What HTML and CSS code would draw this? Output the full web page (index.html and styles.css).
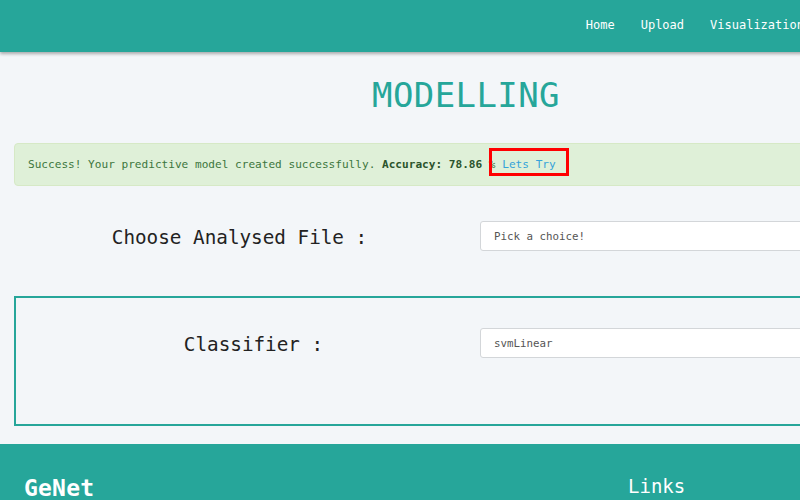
FILE: index.html
```html
<!DOCTYPE html>
<html lang="en">
<head>
<meta charset="utf-8">
<title>Modelling - GeNet</title>
<link rel="stylesheet" href="styles.css">
</head>
<body>
<div class="page">
  <nav class="navbar">
    <ul class="nav-links">
      <li><a href="#">Home</a></li>
      <li><a href="#">Upload</a></li>
      <li><a href="#">Visualization</a></li>
      <li><a href="#">Modelling</a></li>
    </ul>
  </nav>

  <main class="main">
    <h1 class="title">MODELLING</h1>

    <div class="alert">Success! Your predictive model created successfully. <strong>Accuracy: 78.86</strong> % <a class="alert-link" href="#">Lets Try</a><span class="highlight"></span></div>

    <div class="form-row">
      <label class="form-label">Choose Analysed File :</label>
      <div class="input">Pick a choice!</div>
    </div>

    <div class="classifier-box">
      <div class="form-row boxed">
        <label class="form-label">Classifier :</label>
        <div class="input">svmLinear</div>
      </div>
    </div>
  </main>

  <footer class="footer">
    <div class="brand">GeNet</div>
    <div class="links-col">
      <div class="links-title">Links</div>
    </div>
  </footer>
</div>
</body>
</html>
```

FILE: styles.css
```css
html, body {
  margin: 0;
  padding: 0;
  overflow: hidden;
}

body {
  background: #f3f6f9;
  font-family: "DejaVu Sans Mono", "Liberation Mono", monospace;
  color: #333;
}

.page {
  width: 932px;
}

.navbar {
  height: 52px;
  background: #26a69a;
  box-shadow: 0 2px 3px rgba(0, 0, 0, 0.3);
  display: flex;
  align-items: center;
  justify-content: flex-end;
  padding-right: 37px;
  position: relative;
  z-index: 1;
}

.nav-links {
  list-style: none;
  margin: 0;
  padding: 0;
  display: flex;
  gap: 26px;
}

.nav-links a {
  color: #fff;
  text-decoration: none;
  font-size: 12px;
  line-height: 16px;
  display: block;
  margin-top: -2px;
}

.main {
  padding: 0 14px;
}

.title {
  margin: 23px 0 0;
  text-align: center;
  font-size: 34px;
  line-height: 40px;
  font-weight: normal;
  color: #26a69a;
  letter-spacing: 0.4px;
}

.alert {
  position: relative;
  margin-top: 28px;
  padding: 12px 13px;
  line-height: 17px;
  white-space: nowrap;
  background: #dff0d8;
  border: 1px solid #d6e9c6;
  border-radius: 4px;
  color: #3c763d;
  font-size: 11.1px;
}

.alert strong {
  font-weight: bold;
  color: #2b542c;
}

.alert-link {
  color: #35a3d9;
  text-decoration: none;
}

.highlight {
  position: absolute;
  left: 474px;
  top: 4px;
  width: 74px;
  height: 22px;
  border: 3px solid #ff0000;
}

.form-row {
  display: grid;
  grid-template-columns: 451px 1fr;
  column-gap: 15px;
  align-items: center;
  margin-top: 35px;
}

.form-label {
  text-align: center;
  font-size: 19.3px;
  color: #222;
  margin-top: 2px;
}

.input {
  height: 28px;
  border: 1px solid #d3d6d9;
  border-radius: 3px;
  background: #fff;
  padding: 0 13px;
  display: flex;
  align-items: center;
  font-size: 10.8px;
  color: #555;
}

.classifier-box {
  margin-top: 45px;
  border: 2px solid #26a69a;
  padding: 30px 0 66px 26px;
}

.form-row.boxed {
  margin-top: 0;
  grid-template-columns: 423px 1fr;
}

.footer {
  margin-top: 18px;
  background: #26a69a;
  color: #fff;
  display: grid;
  grid-template-columns: 604px 1fr;
  padding: 31px 24px 60px;
  align-items: start;
}

.brand {
  font-size: 23px;
  font-weight: bold;
  letter-spacing: 0.2px;
}

.links-title {
  font-size: 19px;
}
```
